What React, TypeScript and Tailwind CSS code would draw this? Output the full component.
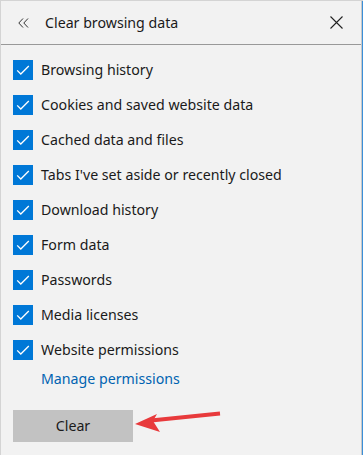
import React from 'react';

const items = [
  'Browsing history',
  'Cookies and saved website data',
  'Cached data and files',
  "Tabs I've set aside or recently closed",
  'Download history',
  'Form data',
  'Passwords',
  'Media licenses',
  'Website permissions',
];

function Check() {
  return (
    <div className="w-5 h-5 bg-[#0078d7] flex items-center justify-center shrink-0">
      <svg width="14" height="14" viewBox="0 0 14 14" fill="none">
        <path d="M1.2 7.4 L4.8 11 L12.8 3" stroke="white" strokeWidth="1.3" />
      </svg>
    </div>
  );
}

export default function App() {
  return (
    <div
      className="relative w-[363px] h-[455px] bg-[#f2f2f2] border-l border-t border-[#d4d4d4] overflow-hidden"
      style={{ fontFamily: '"Noto Sans", "Open Sans", sans-serif' }}
    >
      <div className="absolute right-0 top-0 bottom-0 w-[2px] border-l border-[#c8c8c8] bg-[#3b8fd8]" />

      {/* Header */}
      <div className="h-[43px] flex items-center text-[14.2px] text-[#1a1a1a] pr-[4px]">
        <svg className="ml-[17px] mr-[16px]" width="11" height="10" viewBox="0 0 11 10" fill="none">
          <path d="M5 0.5 L0.8 5 L5 9.5 M10 0.5 L5.8 5 L10 9.5" stroke="#333" strokeWidth="1" />
        </svg>
        <span>Clear browsing data</span>
        <svg className="ml-auto mr-[16px]" width="13" height="13" viewBox="0 0 13 13">
          <path d="M0.5 0.5 L12.5 12.5 M12.5 0.5 L0.5 12.5" stroke="#222" strokeWidth="1.1" />
        </svg>
      </div>
      <div className="h-[1px] mr-[2px] bg-[#999999]" />

      {/* List */}
      <div className="pt-[7px]">
        {items.map((t) => (
          <div key={t} className="h-[35px] flex items-center pl-[12px] gap-[8px] text-[14.2px] text-[#1a1a1a]">
            <Check />
            <span>{t}</span>
          </div>
        ))}
        <div className="h-[24px] flex items-center pl-[40px] text-[14.2px] text-[#0063b1]">Manage permissions</div>
      </div>

      <button className="mt-[19px] ml-[12px] w-[120px] h-[32px] bg-[#c2c2c2] text-[14.2px] text-[#1a1a1a]">
        Clear
      </button>

      {/* Red arrow annotation */}
      <svg className="absolute left-0 top-0 pointer-events-none" width="363" height="455">
        <path d="M219 412.5 L150 419.5" stroke="#e83a3c" strokeWidth="4" strokeLinecap="butt" />
        <path d="M134 423 L156 413 L152 420 L159 431 Z" fill="#e83a3c" />
      </svg>
    </div>
  );
}
